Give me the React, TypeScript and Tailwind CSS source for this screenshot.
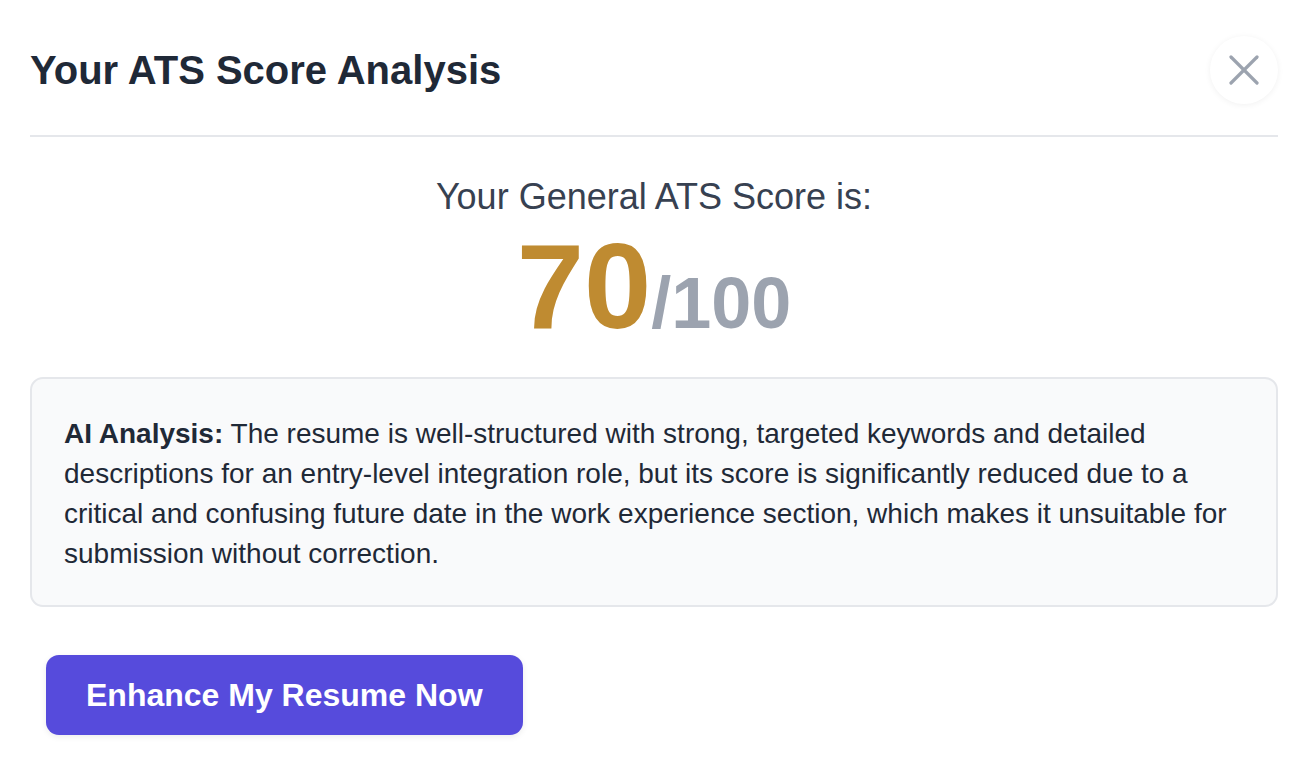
import React from 'react';

function CloseIcon() {
  return (
    <svg width="30" height="30" viewBox="0 0 30 30" fill="none" stroke="#9ca3af" strokeWidth="3.2" strokeLinecap="round">
      <path d="M2 2L28 28" />
      <path d="M28 2L2 28" />
    </svg>
  );
}

export default function App() {
  return (
    <div
      className="min-h-[766px] bg-white pl-[30px] pr-[34px] pt-[36px]"
      style={{ fontFamily: '"Liberation Sans", Arial, sans-serif' }}
    >
      {/* Header */}
      <div className="flex items-center justify-between border-b-2 border-[#e5e7eb] pb-[31px]">
        <h1 className="text-[40px] font-bold leading-none text-[#1f2937]">Your ATS Score Analysis</h1>
        <button className="flex h-[68px] w-[68px] items-center justify-center rounded-full bg-white shadow-[0_1px_6px_rgba(0,0,0,0.06)]">
          <CloseIcon />
        </button>
      </div>

      {/* Score */}
      <div className="mt-[39px] text-center">
        <p className="text-[36px] leading-[42px] text-[#374151]">Your General ATS Score is:</p>
        <p className="mt-[8px] leading-none font-bold">
          <span className="text-[121px] text-[#bf8b31]">70</span>
          <span className="text-[72px] text-[#9ca3af]">/100</span>
        </p>
      </div>

      {/* Analysis */}
      <div className="mt-[30px] rounded-[13px] border-2 border-[#e5e7eb] bg-[#f9fafb] px-[32px] pt-[35px] pb-[31px]">
        <p className="text-[28px] leading-[40px] text-[#1f2937]">
          <span className="font-bold">AI Analysis:</span> The resume is well-structured with strong, targeted keywords and
          detailed descriptions for an entry-level integration role, but its score is significantly reduced due to a
          critical and confusing future date in the work experience section, which makes it unsuitable for submission
          without correction.
        </p>
      </div>

      {/* Action */}
      <div className="mt-[48px] pl-[16px]">
        <button className="h-[80px] rounded-[13px] bg-[#564bdc] px-[40px] text-[32px] font-bold text-white shadow-[0_2px_6px_rgba(0,0,0,0.08)]">
          Enhance My Resume Now
        </button>
      </div>
    </div>
  );
}
